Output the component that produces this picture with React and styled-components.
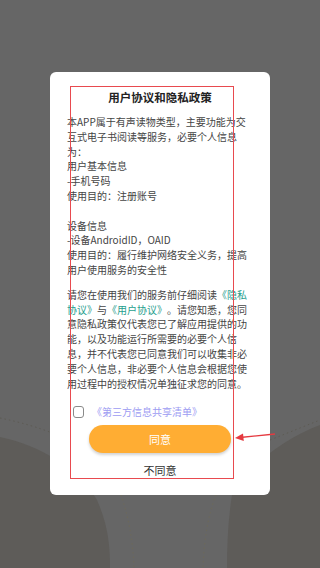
import React from "react";
import styled, { createGlobalStyle } from "styled-components";

const Global = createGlobalStyle`
  html, body { margin: 0; padding: 0; }
  body {
    font-family: "Noto Sans CJK SC", "Noto Sans", sans-serif;
    text-spacing-trim: space-all;
  }
`;

const Screen = styled.div`
  position: relative;
  width: 320px;
  height: 568px;
  overflow: hidden;
  background: #666666;
  display: flex;
  justify-content: center;
  align-items: flex-start;
`;

const Backdrop = styled.svg`
  position: absolute;
  left: 0;
  top: 0;
  width: 320px;
  height: 568px;
  z-index: 0;
`;

const Modal = styled.div`
  position: relative;
  z-index: 1;
  margin-top: 72px;
  width: 220px;
  height: 423px;
  box-sizing: border-box;
  background: #ffffff;
  border-radius: 6px;
  padding: 17px 17px 0;
  display: flex;
  flex-direction: column;
`;

const Title = styled.h1`
  margin: 0;
  font-size: 11.5px;
  line-height: 16px;
  font-weight: 700;
  color: #222;
  text-align: center;
`;

const Body = styled.div`
  margin-top: 10px;
  font-size: 10px;
  line-height: 14.8px;
  color: #444;
`;

const Para = styled.p`
  margin: 0 0 ${(p) => p.$gap || 0}px;
`;

const Link = styled.span`
  color: ${(p) => p.$color};
`;

const CheckRow = styled.label`
  display: flex;
  align-items: center;
  gap: 8px;
  margin-top: 14px;
  padding-left: 6px;
  font-size: 10px;
  line-height: 14px;
`;

const Box = styled.span`
  width: 9px;
  height: 10px;
  border: 1.5px solid #8a8a8a;
  border-radius: 3px;
`;

const Agree = styled.button`
  align-self: center;
  margin-top: 6px;
  width: 142px;
  height: 28px;
  border: none;
  border-radius: 14px;
  background: #ffad33;
  color: #ffffff;
  font-family: inherit;
  font-size: 11px;
  box-shadow: 0 2px 3px rgba(0, 0, 0, 0.18);
`;

const Disagree = styled.div`
  margin-top: 10px;
  text-align: center;
  font-size: 11px;
  line-height: 14px;
  color: #333;
`;

const Highlight = styled.div`
  position: absolute;
  left: 70px;
  top: 86px;
  width: 162px;
  height: 391px;
  border: 1px solid #e84a4f;
  z-index: 2;
  pointer-events: none;
`;

const Arrow = styled.svg`
  position: absolute;
  left: 232px;
  top: 428px;
  width: 44px;
  height: 16px;
  z-index: 2;
`;

const TEAL = "#1f9e8e";

export default function App() {
  return (
    <>
      <Global />
      <Screen>
        <Backdrop viewBox="0 0 320 568">
          <path d="M0 437 C 40 445, 80 470, 97 500 C 108 525, 110 545, 110 568 L 0 568 Z" fill="#5e5c59" />
          <path d="M320 425 C 280 440, 245 470, 232 495 C 228 520, 227 545, 227 568 L 320 568 Z" fill="#5e5c59" />
          <path d="M0 418 C 20 422, 40 428, 52 433" stroke="#5a584f" strokeWidth="0.8" strokeDasharray="1.5 3" fill="none" />
          <path d="M270 440 C 290 432, 305 426, 320 420" stroke="#5a584f" strokeWidth="0.8" strokeDasharray="1.5 3" fill="none" />
          <path d="M121 495 C 128 515, 133 540, 134 568" stroke="#6f6a55" strokeWidth="0.8" strokeDasharray="1.5 3" fill="none" />
          <path d="M216 495 C 208 515, 204 540, 203 568" stroke="#6f6a55" strokeWidth="0.8" strokeDasharray="1.5 3" fill="none" />
        </Backdrop>
        <Modal>
          <Title>用户协议和隐私政策</Title>
          <Body>
            <Para $gap={10}>
              本APP属于有声读物类型，主要功能为交互式电子书阅读等服务，必要个人信息为：
              <br />
              用户基本信息
              <br />
              -手机号码
              <br />
              使用目的：注册账号
              <br />
              <br />
              设备信息
              <br />
              -设备AndroidID，OAID
              <br />
              使用目的：履行维护网络安全义务，提高用户使用服务的安全性
            </Para>
            <Para>
              请您在使用我们的服务前仔细阅读<Link $color={TEAL}>《隐私</Link>
              <Link $color={TEAL}>协议》</Link>与<Link $color={TEAL}>《用户协议》</Link>
              。请您知悉，您同意隐私政策仅代表您已了解应用提供的功能，以及功能运行所需要的必要个人信息，并不代表您已同意我们可以收集非必要个人信息，非必要个人信息会根据您使用过程中的授权情况单独征求您的同意。
            </Para>
          </Body>
          <CheckRow>
            <Box />
            <Link $color="#9d9cf2">《第三方信息共享清单》</Link>
          </CheckRow>
          <Agree>同意</Agree>
          <Disagree>不同意</Disagree>
        </Modal>
        <Highlight />
        <Arrow viewBox="0 0 44 16">
          <line x1="43" y1="6" x2="8" y2="9.5" stroke="#e53a40" strokeWidth="1.3" />
          <polygon points="3,10 11,5.5 11.8,13" fill="#e53a40" />
        </Arrow>
      </Screen>
    </>
  );
}
